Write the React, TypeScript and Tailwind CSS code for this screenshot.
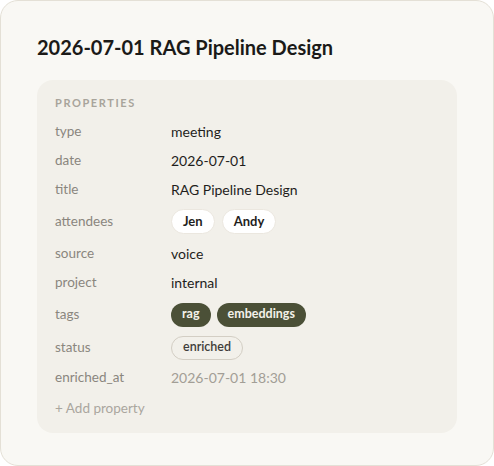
type Prop = { label: string; kind: 'text' | 'muted' | 'people' | 'tags' | 'status'; value: string | string[] }

const properties: Prop[] = [
  { label: 'type', kind: 'text', value: 'meeting' },
  { label: 'date', kind: 'text', value: '2026-07-01' },
  { label: 'title', kind: 'text', value: 'RAG Pipeline Design' },
  { label: 'attendees', kind: 'people', value: ['Jen', 'Andy'] },
  { label: 'source', kind: 'text', value: 'voice' },
  { label: 'project', kind: 'text', value: 'internal' },
  { label: 'tags', kind: 'tags', value: ['rag', 'embeddings'] },
  { label: 'status', kind: 'status', value: 'enriched' },
  { label: 'enriched_at', kind: 'muted', value: '2026-07-01 18:30' },
]

function Value({ prop }: { prop: Prop }) {
  if (prop.kind === 'people') {
    return (
      <div className="flex items-center gap-[7px]">
        {(prop.value as string[]).map((p) => (
          <span
            key={p}
            className="h-[25px] px-[11px] flex items-center rounded-full bg-white border border-[#ebe7df] text-[13px] font-bold text-[#1f1e1c]"
          >
            {p}
          </span>
        ))}
      </div>
    )
  }
  if (prop.kind === 'tags') {
    return (
      <div className="flex items-center gap-[6px]">
        {(prop.value as string[]).map((t) => (
          <span
            key={t}
            className="h-[24px] px-[11px] flex items-center rounded-full bg-[#4b5037] text-[12.5px] font-bold text-[#f4f2ea]"
          >
            {t}
          </span>
        ))}
      </div>
    )
  }
  if (prop.kind === 'status') {
    return (
      <span className="h-[24px] px-[11px] flex items-center rounded-full border border-[#d3cec4] text-[12.5px] font-semibold text-[#3f3d39]">
        {prop.value}
      </span>
    )
  }
  if (prop.kind === 'muted') {
    return <span className="text-[14px] text-[#a29e96]">{prop.value}</span>
  }
  return <span className="text-[14px] text-[#1f1e1c]">{prop.value}</span>
}

const rowHeight: Record<Prop['kind'], string> = {
  text: 'h-[29px]',
  muted: 'h-[29px]',
  people: 'h-[35px]',
  tags: 'h-[35px]',
  status: 'h-[31px]',
}

export default function App() {
  return (
    <div
      className="w-[494px] h-[466px] box-border rounded-[18px] border border-[#e4e0d6] bg-[#f9f8f4] px-[36px] pt-[32px]"
      style={{ fontFamily: 'Lato, "Noto Sans", sans-serif' }}
    >
      <h1 className="text-[20px] leading-[28px] font-bold text-[#1b1a18] mb-[19px]">
        2026-07-01 RAG Pipeline Design
      </h1>

      <div className="rounded-[16px] bg-[#f2f0ea] px-[18px] pt-[15px] pb-[14px]">
        <div className="text-[11px] leading-[16px] font-bold tracking-[1.6px] text-[#a8a49b] mb-[6px]">
          PROPERTIES
        </div>

        {properties.map((p) => (
          <div key={p.label} className={`flex items-center ${rowHeight[p.kind]}`}>
            <div className="w-[116px] text-[13.5px] text-[#8a867e]">{p.label}</div>
            <Value prop={p} />
          </div>
        ))}

        <button className="mt-[6px] text-[13.5px] leading-[20px] text-[#aaa69e]">+ Add property</button>
      </div>
    </div>
  )
}
